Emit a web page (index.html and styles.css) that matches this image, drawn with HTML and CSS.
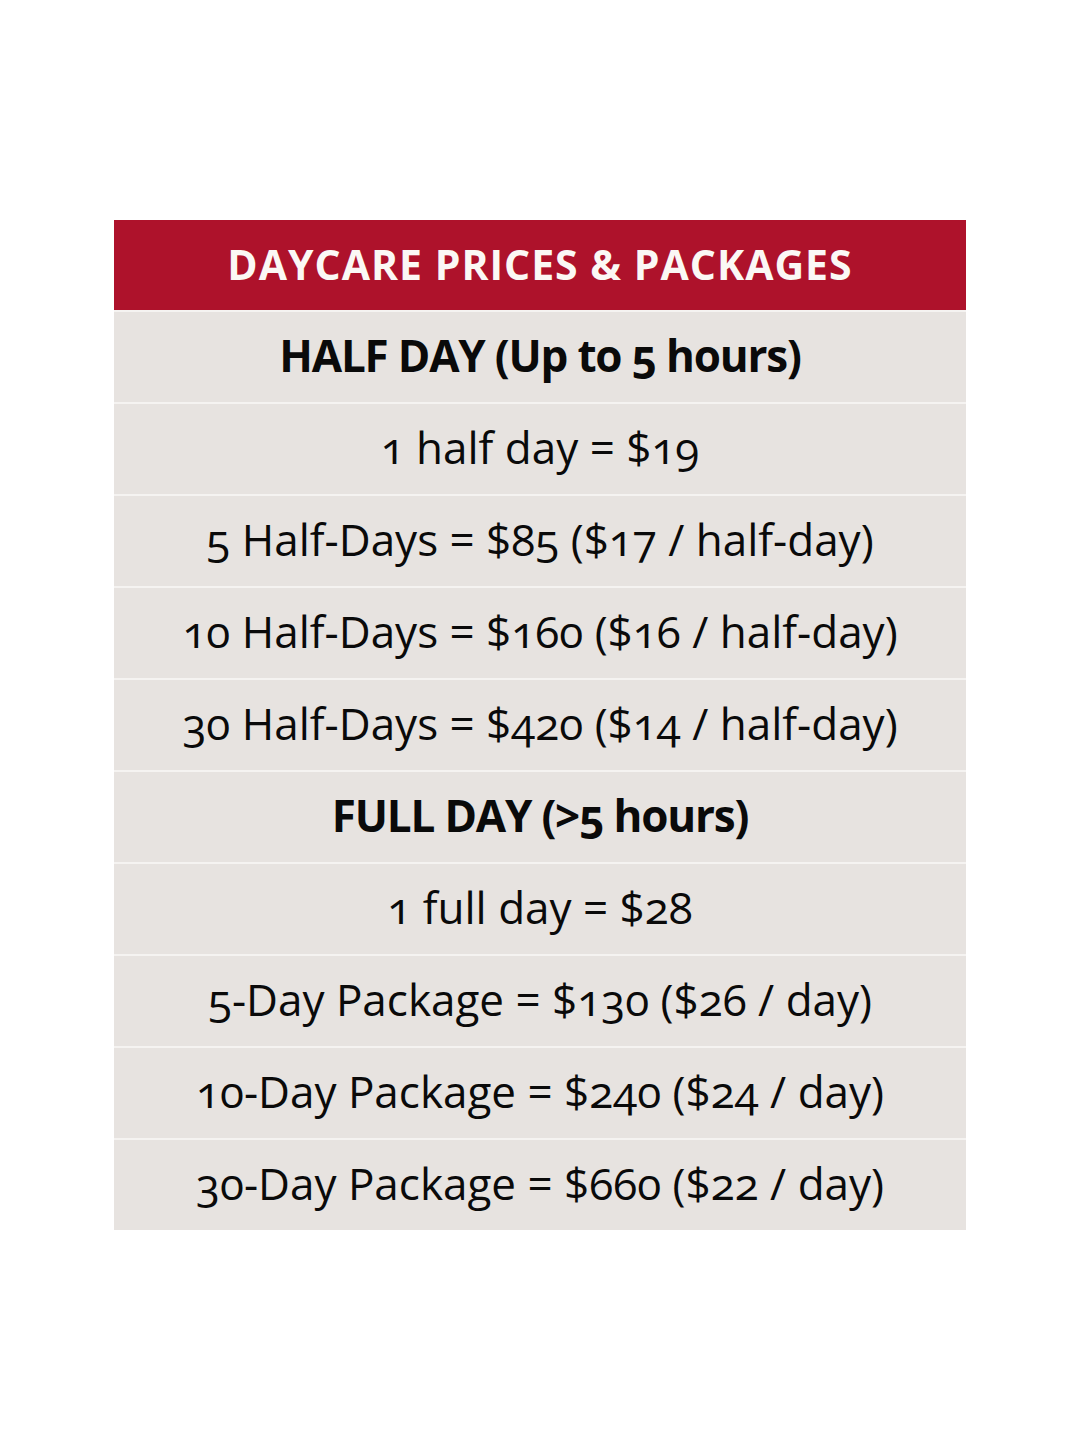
FILE: index.html
```html
<!DOCTYPE html>
<html>
<head>
<meta charset="utf-8">
<link rel="stylesheet" href="styles.css">
</head>
<body>
<div class="page">
  <div class="table">
    <div class="head">DAYCARE PRICES &amp; PACKAGES</div>
    <div class="row bold">HALF DAY (Up to 5 hours)</div>
    <div class="row">1 half day = $19</div>
    <div class="row">5 Half-Days = $85 ($17 / half-day)</div>
    <div class="row">10 Half-Days = $160 ($16 / half-day)</div>
    <div class="row">30 Half-Days = $420 ($14 / half-day)</div>
    <div class="row bold">FULL DAY (&gt;5 hours)</div>
    <div class="row">1 full day = $28</div>
    <div class="row">5-Day Package = $130 ($26 / day)</div>
    <div class="row">10-Day Package = $240 ($24 / day)</div>
    <div class="row">30-Day Package = $660 ($22 / day)</div>
  </div>
</div>
</body>
</html>
```

FILE: styles.css
```css
html, body {
  margin: 0;
  padding: 0;
  background: #ffffff;
}
.page {
  width: 1080px;
  height: 1450px;
  padding-top: 220px;
  box-sizing: border-box;
  display: flex;
  flex-direction: column;
  align-items: center;
  font-family: "Open Sans", "Lato", sans-serif;
  font-variant-numeric: oldstyle-nums;
}
.table {
  width: 852px;
  display: flex;
  flex-direction: column;
  gap: 2px;
  background: #f5f3f1;
}
.head {
  height: 90px;
  background: #ae122b;
  color: #fbf8f5;
  font-weight: 700;
  font-size: 41px;
  letter-spacing: 1px;
  display: flex;
  align-items: center;
  justify-content: center;
  padding-bottom: 2px;
  box-sizing: border-box;
}
.row {
  height: 90px;
  background: #e7e3e0;
  color: #0a0a0a;
  font-size: 44px;
  display: flex;
  align-items: center;
  justify-content: center;
  padding-bottom: 4px;
  box-sizing: border-box;
}
.row.bold {
  font-weight: 700;
  letter-spacing: -1.2px;
}
```
